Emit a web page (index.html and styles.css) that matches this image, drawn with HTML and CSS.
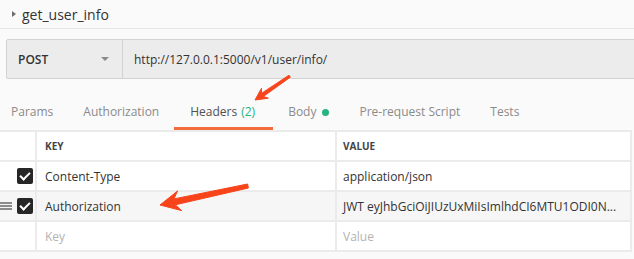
FILE: index.html
```html
<!DOCTYPE html>
<html lang="en">

<head>
    <meta charset="UTF-8">
    <meta name="viewport" content="width=device-width, initial-scale=1.0">
    <title>get_user_info</title>
    <link rel="stylesheet" href="styles.css">
</head>

<body>

    <div class="page">
        <!-- Request name -->
        <div class="title-bar">
            <span class="caret"></span>
            <span class="title">get_user_info</span>
        </div>

        <!-- Method + URL -->
        <div class="request-bar">
            <div class="method">
                <span>POST</span>
                <span class="drop"></span>
            </div>
            <div class="url">http://127.0.0.1:5000/v1/user/info/</div>
        </div>

        <!-- Tabs -->
        <div class="tabs">
            <div class="tab">Params</div>
            <div class="tab">Authorization</div>
            <div class="tab active">Headers <span class="count">(2)</span></div>
            <div class="tab">Body <span class="dot"></span></div>
            <div class="tab">Pre-request Script</div>
            <div class="tab">Tests</div>
        </div>

        <!-- Headers table -->
        <table class="headers-table">
            <tr class="head-row">
                <th class="col-check"></th>
                <th class="col-key">KEY</th>
                <th class="col-value">VALUE</th>
            </tr>
            <tr>
                <td class="col-check"><span class="checkbox"></span></td>
                <td class="col-key">Content-Type</td>
                <td class="col-value">application/json</td>
            </tr>
            <tr class="hover-row">
                <td class="col-check"><span class="handle"></span><span class="checkbox"></span></td>
                <td class="col-key">Authorization</td>
                <td class="col-value">JWT eyJhbGciOiJIUzUxMiIsImlhdCI6MTU1ODI0N...</td>
            </tr>
            <tr>
                <td class="col-check"></td>
                <td class="col-key placeholder">Key</td>
                <td class="col-value placeholder">Value</td>
            </tr>
        </table>

        <!-- Annotation arrows drawn over the screenshot -->
        <svg class="annotations" width="634" height="259" viewBox="0 0 634 259">
            <polygon points="255,100 261.5,88.3 261.4,93.4 289,75.2 290.3,77.2 263.4,96.4 268.3,98.2" />
            <polygon points="160,205 177.5,191 174,198.9 247.6,184 248.4,188 175.3,204.8 181.7,210.6" />
        </svg>
    </div>

</body>

</html>
```

FILE: styles.css
```css
body {
    margin: 0;
    padding: 0;
    font-family: "Open Sans", "Noto Sans", sans-serif;
    background-color: #fafafa;
    color: #333;
    overflow: hidden;
}

.page {
    position: relative;
    width: 634px;
    height: 259px;
    overflow: hidden;
}

/* Request name */
.title-bar {
    height: 28px;
    display: flex;
    align-items: center;
    padding-left: 12px;
    border-bottom: 1px solid #e6e6e6;
}

.caret {
    width: 0;
    height: 0;
    border-top: 3px solid transparent;
    border-bottom: 3px solid transparent;
    border-left: 4px solid #6e6e6e;
    margin-right: 6px;
}

.title {
    font-size: 14px;
    color: #333;
}

/* Method + URL */
.request-bar {
    display: flex;
    height: 38px;
    margin: 10px -10px 0 6px;
    background-color: #ececec;
    border: 1px solid #d2d2d2;
    border-radius: 2px;
}

.method {
    width: 104px;
    padding-left: 11px;
    display: flex;
    align-items: center;
    justify-content: space-between;
    border-right: 1px solid #d2d2d2;
    font-size: 12px;
    font-weight: 600;
    color: #333;
}

.drop {
    width: 0;
    height: 0;
    margin-right: 13px;
    border-left: 4px solid transparent;
    border-right: 4px solid transparent;
    border-top: 4px solid #8a8a8a;
}

.url {
    display: flex;
    align-items: center;
    padding-left: 11px;
    font-size: 12px;
    color: #333;
}

/* Tabs */
.tabs {
    display: flex;
    align-items: flex-end;
    height: 51px;
    margin-left: -4px;
}

.tab {
    padding: 0 15px 6px;
    line-height: 18px;
    font-size: 12px;
    color: #8a8a8a;
    border-bottom: 3px solid transparent;
    display: flex;
    align-items: center;
}

.tab.active {
    color: #505050;
    border-bottom-color: #f26b3a;
    padding: 0 18px 6px 16px;
}

.count {
    color: #26b47f;
    margin-left: 4px;
}

.dot {
    width: 7px;
    height: 7px;
    border-radius: 50%;
    background-color: #26b47f;
    margin-left: 6px;
}

/* Headers table */
.headers-table {
    width: 632px;
    border-collapse: separate;
    border-spacing: 0;
    border-top: 2px solid #ebebeb;
    background-color: #fff;
    table-layout: fixed;
}

.headers-table th,
.headers-table td {
    height: 28px;
    padding: 0;
    border-bottom: 2px solid #ebebeb;
    border-right: 2px solid #ebebeb;
    text-align: left;
    white-space: nowrap;
    overflow: hidden;
    font-size: 12px;
    color: #333;
}

.headers-table th {
    font-size: 10px;
    font-weight: 700;
    color: #444;
}

.col-check {
    width: 35px;
    position: relative;
}

.headers-table .col-key {
    width: 290px;
    padding-left: 8px;
}

.headers-table .col-value {
    padding-left: 6px;
}

.headers-table .placeholder {
    color: #b3b3b3;
}

.hover-row td {
    background-color: #f6f6f6;
}

.checkbox {
    position: absolute;
    right: 2px;
    top: 6px;
    width: 16px;
    height: 16px;
    border-radius: 2px;
    background-color: #262626;
}

.checkbox::after {
    content: "";
    position: absolute;
    left: 5px;
    top: 2px;
    width: 4px;
    height: 8px;
    border-right: 2px solid #fff;
    border-bottom: 2px solid #fff;
    transform: rotate(45deg);
}

.handle {
    position: absolute;
    left: 0;
    top: 10px;
    width: 12px;
    height: 2px;
    background-color: #8c8c8c;
    box-shadow: 0 3px 0 #8c8c8c, 0 6px 0 #8c8c8c;
}

/* Annotation arrows */
.annotations {
    position: absolute;
    top: 0;
    left: 0;
    pointer-events: none;
}

.annotations polygon {
    fill: #f8441a;
    stroke: #f8441a;
    stroke-width: 1;
    stroke-linejoin: round;
}
```
